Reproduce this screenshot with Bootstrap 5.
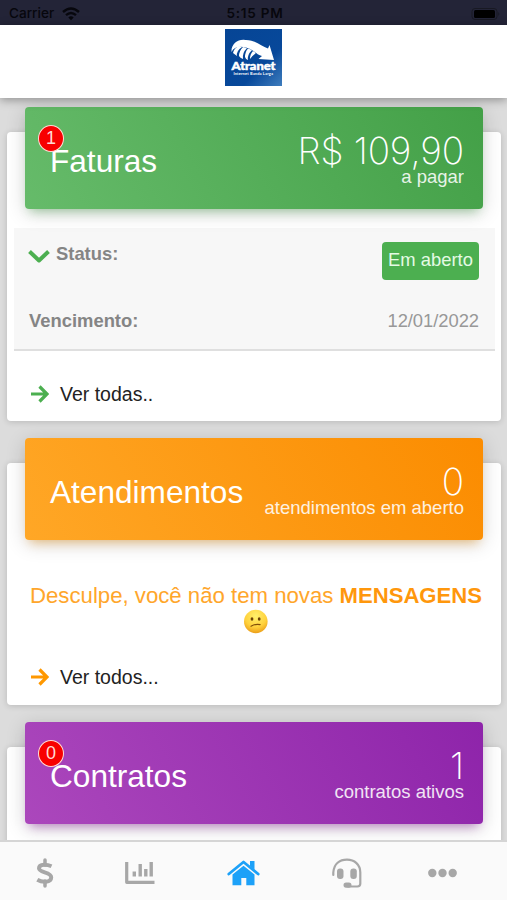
<!DOCTYPE html>
<html lang="pt-BR">
<head>
<meta charset="utf-8">
<meta name="viewport" content="width=device-width, initial-scale=1">
<title>Atranet</title>
<link href="https://cdn.jsdelivr.net/npm/bootstrap@5.3.0/dist/css/bootstrap.min.css" rel="stylesheet">
<style>
body{font-family:"Liberation Sans",Arial,sans-serif;background:#dcdcdc;height:900px;overflow:hidden}
.statusbar{height:25px;background:#232437;color:#07070d;font:500 13.6px/27px Inter,sans-serif;padding:0 6px 0 9px}
.statusbar .col:nth-child(2){font-weight:600;letter-spacing:.75px}
.brandbar{height:73px;padding-top:4px;box-shadow:0 2px 9px rgba(0,0,0,.35);z-index:2}
.content-area{min-height:0;padding:34px 6px 0 7px}
.panel{border:0;border-radius:4px;margin-bottom:42px;box-shadow:0 1px 6px rgba(0,0,0,.16)}
.panel-one{height:289px}.panel-two{height:242px}.panel-three{height:140px}
.banner{height:101.6px;margin:-24.6px 18px 0 18px;border-radius:4px;padding:0 19px 0 25px;color:#fff}
.green{background:linear-gradient(60deg,#66bb6a,#43a047);box-shadow:0 4px 20px rgba(0,0,0,.16),0 7px 10px -5px rgba(76,175,80,.45)}
.orange{background:linear-gradient(60deg,#ffa726,#fb8c00);box-shadow:0 4px 20px rgba(0,0,0,.16),0 7px 10px -5px rgba(255,152,0,.45)}
.purple{background:linear-gradient(60deg,#ab47bc,#8e24aa);box-shadow:0 4px 20px rgba(0,0,0,.16),0 7px 10px -5px rgba(156,39,176,.5)}
.banner h2{font-size:31.6px;line-height:36px;font-weight:400;padding-top:5px}
.figure-num{font-family:Inter,sans-serif;font-weight:250;font-size:37px;line-height:37px}
.figure-money{letter-spacing:-.1px}
.figure-label{font-size:18.5px;line-height:22px;margin-top:-4px;padding-top:1px;opacity:.87}
.counter{top:18px;left:13px;width:26px;height:27px;border:1px solid #ffdcd5;background:#f80000;color:#ffd9d4;font-size:18px;line-height:25px}
.invoice{margin:19px 6px 0 7px;height:123px;background:#f7f7f7;border-bottom:2px solid #dfdfdf;color:#858585;font-size:18.4px;line-height:24px;padding:14px 16px 0 15px}
.invoice .chevron{margin:3px 5px 0 -1px}
.due-row{padding-top:29px}
.state{background:#4caf50;color:#e4fae4;width:97px;height:38px;border-radius:4px;line-height:36px}
.date-text{color:#989898;letter-spacing:-.05px}
.more{font-size:19.5px;line-height:24px;color:#222;padding:31px 0 0 24px;gap:11px}
.notice{font-size:22.2px;line-height:26px;color:#ffa62b;padding:43px 0 0 4px;white-space:nowrap}
.notice b{color:#ff970c;font-size:22.1px}
.tabs{height:60px;background:#fafafa;border-top:2px solid #d5d5d5;z-index:3;color:#a7a7a7;padding:4px 0 0 36px}
.tabs svg{display:block}
</style>
<script src="https://cdn.jsdelivr.net/npm/bootstrap@5.3.0/dist/js/bootstrap.bundle.min.js"></script>
</head>
<body class="d-flex flex-column">
<div class="statusbar row g-0 flex-shrink-0">
  <div class="col d-flex align-items-center">Carrier
    <svg class="ms-2" width="18" height="14" viewBox="0 0 18 14" fill="none" stroke="currentColor" stroke-width="2.4"><path d="M1 5Q9-2 17 5M4 8.2Q9 3.8 14 8.2"/><path d="M6.3 10.4Q9 8.2 11.7 10.4L9 13.2Z" fill="currentColor" stroke="none"/></svg>
  </div>
  <div class="col text-center">5:15 PM</div>
  <div class="col d-flex justify-content-end align-items-center">
    <svg width="30" height="14" viewBox="0 0 30 14"><rect x="1" y="1.5" width="25" height="11" rx="3" fill="none" stroke="#181923"/><rect x="3" y="3" width="21" height="8" rx="1.5" fill="#000"/><path d="M27.3 5q2 2 0 4z" fill="#181923"/></svg>
  </div>
</div>
<header class="brandbar bg-white text-center position-relative flex-shrink-0">
  <svg class="d-inline-block" width="57" height="57" viewBox="0 0 57 57">
    <defs><linearGradient id="lg" x1="0" y1="0" x2="1" y2="1"><stop offset="0" stop-color="#064595"/><stop offset=".65" stop-color="#07489a"/><stop offset="1" stop-color="#3f7dbd"/></linearGradient></defs>
    <rect width="57" height="57" fill="url(#lg)"/>
    <path fill="#fff" d="M6.5 23C6 15 13 10 20 11C30 10.5 36 17 43 19.5L44.5 16L49 31L33.5 30L37 27C31 25.5 28 20 21 18.5C14 17 9 18 6.5 23Z"/>
    <path fill="#fff" d="M8 24Q9 19 14 17L17 18Q11 22 12 27ZM14 27Q14 22 18 18L22 19Q17 24 18 30Q15 29 14 27ZM20 28Q20 23 23 19.5L27 21Q22 26 23 31Q21 31 20 28ZM25 30Q25 25 28 22L31 24Q27 27 25 30Z"/>
    <text x="6.5" y="41" font-family="Lato,sans-serif" font-weight="900" font-size="12" fill="#fff" stroke="#fff" stroke-width=".5" textLength="44" lengthAdjust="spacingAndGlyphs">Atranet</text>
    <text x="8.5" y="46.3" font-family="Lato,sans-serif" font-weight="700" font-size="4" fill="#fff" textLength="39.5">Internet Banda Larga</text>
  </svg>
</header>
<main class="content-area flex-grow-1">
  <section class="card panel panel-one">
    <div class="banner green d-flex justify-content-between align-items-center position-relative">
      <span class="counter position-absolute rounded-circle text-center">1</span>
      <h2 class="mb-0">Faturas</h2>
      <div class="text-end pt-1"><div class="figure-num figure-money">R$ 109,90</div><div class="figure-label">a pagar</div></div>
    </div>
    <div class="invoice">
      <div class="d-flex justify-content-between">
        <div class="d-flex"><svg class="chevron" width="23" height="22" viewBox="0 0 23 22" fill="none" stroke="#4caf50" stroke-width="4"><path d="M1.5 6.5L11 15.5L20.5 6.5" stroke-linejoin="round"/></svg><b>Status:</b></div>
        <div class="state text-center">Em aberto</div>
      </div>
      <div class="due-row d-flex justify-content-between"><b>Vencimento:</b><span class="date-text">12/01/2022</span></div>
    </div>
    <div class="more d-flex align-items-center"><svg width="18" height="18" viewBox="0 0 18 18" fill="none" stroke="#4caf50" stroke-width="3.2"><path d="M0 9H16M8.5 1.5L16 9L8.5 16.5"/></svg><span>Ver todas..</span></div>
  </section>
  <section class="card panel panel-two">
    <div class="banner orange d-flex justify-content-between align-items-center">
      <h2 class="mb-0">Atendimentos</h2>
      <div class="text-end pt-1"><div class="figure-num">0</div><div class="figure-label">atendimentos em aberto</div></div>
    </div>
    <div class="notice text-center">Desculpe, você não tem novas <b>MENSAGENS</b>
      <svg class="d-block mx-auto" width="25" height="25" viewBox="0 0 25 25"><defs><radialGradient id="face" cx=".5" cy=".28" r=".7"><stop offset="0" stop-color="#fff06b"/><stop offset=".65" stop-color="#ffd13c"/><stop offset="1" stop-color="#eda21b"/></radialGradient></defs><circle cx="11.8" cy="12.5" r="11.8" fill="url(#face)"/><ellipse cx="8" cy="10" rx="1.4" ry="1.8" fill="#6d4206"/><ellipse cx="15.2" cy="10" rx="1.4" ry="1.8" fill="#6d4206"/><path d="M7 17.2Q11.3 14.6 16.1 15.6" fill="none" stroke="#825008" stroke-width="1.2" stroke-linecap="round"/></svg>
    </div>
    <div class="more d-flex align-items-center"><svg width="18" height="18" viewBox="0 0 18 18" fill="none" stroke="#ff9800" stroke-width="3.2"><path d="M0 9H16M8.5 1.5L16 9L8.5 16.5"/></svg><span>Ver todos...</span></div>
  </section>
  <section class="card panel panel-three">
    <div class="banner purple d-flex justify-content-between align-items-center position-relative">
      <span class="counter position-absolute rounded-circle text-center">0</span>
      <h2 class="mb-0">Contratos</h2>
      <div class="text-end pt-1"><div class="figure-num">1</div><div class="figure-label">contratos ativos</div></div>
    </div>
  </section>
</main>
<nav class="tabs d-flex align-items-center flex-shrink-0 position-relative">
  <div><svg width="18" height="30" viewBox="0 0 18 30" fill="none" stroke="currentColor"><path d="M15.5 8.2C12 6.6 3 5 3 10.3C3 15 15.2 13.6 15.2 19.3C15.2 25 6 24.5 1.3 21.8" stroke-width="4"/><path d="M9 2V7M9 23V28" stroke-width="3.5" stroke-linecap="round"/></svg></div>
  <div style="margin-left:71px"><svg width="30" height="24" viewBox="0 0 30 24" fill="none" stroke="currentColor"><path d="M1.7 1V21.3H29.5" stroke-width="3.2" stroke-linejoin="round"/><path d="M9.3 10.5V15.5M15.2 3V15.5M20.8 8V15.5M26.2 1V15.5" stroke-width="3.4"/></svg></div>
  <div style="margin-left:72px"><svg width="33" height="28" viewBox="0 0 33 28"><path d="M1.8 15L16.5 3L31.2 15" fill="none" stroke="#1da1f8" stroke-width="2.8" stroke-linecap="round" stroke-linejoin="round"/><path fill="#1da1f8" d="M23 2H27.5V11L23 7ZM5.5 15.6L16.5 6.7L27.5 15.6V26.3H19.3V19H14.3V26.3H5.5Z"/></svg></div>
  <div style="margin-left:72px"><svg width="30" height="31" viewBox="0 0 30 31" fill="none" stroke="currentColor" stroke-width="2.2"><path d="M1.3 17V14.5C2 6 7.5 1.7 15 1.7S28.3 6.5 28.3 14.5V25.5Q28.3 28.5 25.3 28.5H16" stroke-linecap="round"/><rect x="5" y="10.5" width="6.5" height="10.5" rx="3" fill="currentColor" stroke="none"/><rect x="18.3" y="10.5" width="6.5" height="10.5" rx="3" fill="currentColor" stroke="none"/><rect x="11.5" y="24.5" width="8" height="5.2" rx="2.6" fill="currentColor" stroke="none"/></svg></div>
  <div style="margin-left:66px"><svg width="29" height="10" viewBox="0 0 29 10" fill="currentColor"><circle cx="4.3" cy="5" r="4.2"/><circle cx="14.5" cy="5" r="4.2"/><circle cx="24.7" cy="5" r="4.2"/></svg></div>
</nav>
</body>
</html>
